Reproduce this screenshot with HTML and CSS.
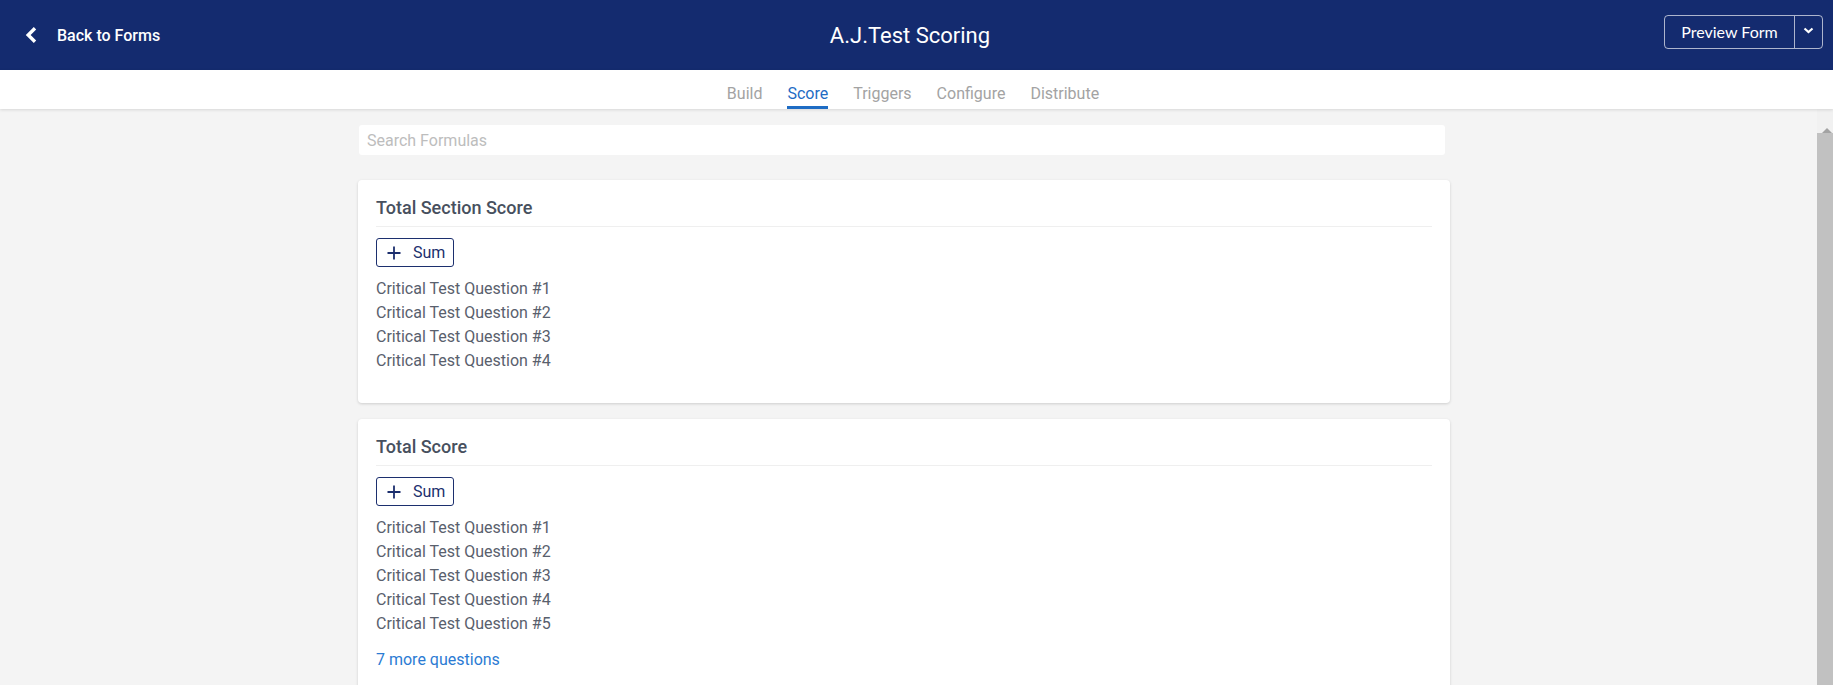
FILE: index.html
```html
<!DOCTYPE html>
<html lang="en">
<head>
    <meta charset="UTF-8">
    <meta name="viewport" content="width=device-width, initial-scale=1.0">
    <title>A.J.Test Scoring</title>
    <link rel="stylesheet" href="styles.css">
</head>
<body>

    <header class="topbar">
        <a class="back-link" href="#">
            <svg class="back-icon" width="12" height="16" viewBox="0 0 12 16">
                <path d="M10 1.3 L3.2 8 L10 14.7" fill="none" stroke="#fff" stroke-width="3.4" stroke-linejoin="miter"/>
            </svg>
            <span>Back to Forms</span>
        </a>
        <h1 class="form-title">A.J.Test Scoring</h1>
        <div class="preview-group">
            <button class="preview-btn">Preview Form</button>
            <button class="preview-caret">
                <svg width="11" height="7" viewBox="0 0 11 7">
                    <path d="M1.5 1.5 L5.5 5 L9.5 1.5" fill="none" stroke="#fff" stroke-width="2.2"/>
                </svg>
            </button>
        </div>
    </header>

    <nav class="tabs">
        <a class="tab" href="#">Build</a>
        <a class="tab active" href="#">Score</a>
        <a class="tab" href="#">Triggers</a>
        <a class="tab" href="#">Configure</a>
        <a class="tab" href="#">Distribute</a>
    </nav>

    <div class="main">
        <div class="content">
            <div class="container">
                <input class="search" type="text" placeholder="Search Formulas">

                <section class="card">
                    <h3 class="card-title">Total Section Score</h3>
                    <button class="sum-btn">
                        <svg width="14" height="14" viewBox="0 0 14 14">
                            <path d="M7 0.5 V13.5 M0.5 7 H13.5" stroke="#1c2f6e" stroke-width="1.8"/>
                        </svg>
                        <span>Sum</span>
                    </button>
                    <ul class="questions">
                        <li>Critical Test Question #1</li>
                        <li>Critical Test Question #2</li>
                        <li>Critical Test Question #3</li>
                        <li>Critical Test Question #4</li>
                    </ul>
                </section>

                <section class="card">
                    <h3 class="card-title">Total Score</h3>
                    <button class="sum-btn">
                        <svg width="14" height="14" viewBox="0 0 14 14">
                            <path d="M7 0.5 V13.5 M0.5 7 H13.5" stroke="#1c2f6e" stroke-width="1.8"/>
                        </svg>
                        <span>Sum</span>
                    </button>
                    <ul class="questions">
                        <li>Critical Test Question #1</li>
                        <li>Critical Test Question #2</li>
                        <li>Critical Test Question #3</li>
                        <li>Critical Test Question #4</li>
                        <li>Critical Test Question #5</li>
                    </ul>
                    <a class="more-link" href="#">7 more questions</a>
                </section>
            </div>
        </div>
        <div class="scrollbar">
            <div class="scroll-up"></div>
            <div class="scroll-thumb"></div>
        </div>
    </div>

</body>
</html>
```

FILE: styles.css
```css
body {
    font-family: Roboto, "Liberation Sans", sans-serif;
    margin: 0;
    height: 100vh;
    display: flex;
    flex-direction: column;
    overflow: hidden;
    background: #f4f4f4;
}
a {
    text-decoration: none;
}

/* top bar */
.topbar {
    height: 70px;
    flex-shrink: 0;
    background: #142b6f;
    display: grid;
    grid-template-columns: 1fr auto 1fr;
    align-items: center;
}
.back-link {
    display: flex;
    align-items: center;
    gap: 20px;
    padding-left: 25px;
    color: #fff;
    font-size: 16px;
    font-weight: 500;
}
.form-title {
    margin: 0 13px 0 0;
    color: #fff;
    font-size: 22px;
    font-weight: 400;
}
.preview-group {
    justify-self: end;
    align-self: start;
    margin: 15px 10px 0 0;
    display: flex;
    height: 34px;
    border: 1px solid rgba(255, 255, 255, 0.65);
    border-radius: 4px;
    box-sizing: border-box;
}
.preview-btn, .preview-caret {
    background: none;
    border: none;
    color: #fff;
    cursor: pointer;
    padding: 0;
}
.preview-btn {
    font-family: Lato, "Liberation Sans", sans-serif;
    font-size: 16px;
    width: 129px;
    padding-bottom: 2px;
}
.preview-caret {
    width: 28px;
    border-left: 1px solid rgba(255, 255, 255, 0.65);
    display: flex;
    align-items: center;
    justify-content: center;
    padding-bottom: 3px;
}

/* tabs */
.tabs {
    height: 39px;
    flex-shrink: 0;
    background: #fff;
    display: flex;
    justify-content: center;
    gap: 25px;
    padding-right: 7px;
    box-shadow: 0 1px 3px rgba(0, 0, 0, 0.12);
    position: relative;
    z-index: 1;
}
.tab {
    box-sizing: border-box;
    height: 39px;
    padding-top: 14px;
    line-height: 19px;
    font-size: 16px;
    color: #a3a3a3;
    border-bottom: 3px solid transparent;
}
.tab.active {
    color: #1e6cc4;
    border-bottom-color: #1e6cc4;
}

/* main area */
.main {
    flex: 1;
    min-height: 0;
    display: flex;
    overflow: hidden;
}
.content {
    flex: 1;
    padding: 0 9px 0 0;
}
.container {
    width: 1092px;
    margin: 0 auto;
    padding-top: 16px;
}
.search {
    display: block;
    box-sizing: border-box;
    width: 1086px;
    height: 30px;
    margin-left: 1px;
    padding: 1px 8px 0;
    border: none;
    border-radius: 3px;
    background: #fff;
    font-family: Roboto, sans-serif;
    font-size: 16px;
    outline: none;
}
.search::placeholder {
    color: #bdbdbd;
}
.card {
    background: #fff;
    border-radius: 4px;
    box-shadow: 0 1px 3px rgba(0, 0, 0, 0.16);
    padding: 16px 18px 18px;
    margin-top: 25px;
}
.card + .card {
    margin-top: 16px;
}
.card-title {
    margin: 0;
    font-size: 18px;
    font-weight: 500;
    line-height: 24px;
    color: #47505e;
    padding-bottom: 6px;
    border-bottom: 1px solid #efefef;
}
.sum-btn {
    margin-top: 11px;
    height: 29px;
    display: flex;
    align-items: center;
    gap: 12px;
    padding: 0 8px 0 10px;
    background: #fff;
    border: 1px solid #1c2f6e;
    border-radius: 3px;
    color: #1c2f6e;
    font-family: Roboto, sans-serif;
    font-size: 16px;
    cursor: pointer;
}
.questions {
    list-style: none;
    margin: 10px 0 12px;
    padding: 0;
}
.questions li {
    font-size: 16px;
    line-height: 24px;
    color: #59606d;
}
.more-link {
    display: block;
    font-size: 16px;
    line-height: 24px;
    color: #2b7bd3;
}

/* fake scrollbar */
.scrollbar {
    width: 16px;
    flex-shrink: 0;
    background: #f1f1f1;
    display: flex;
    flex-direction: column;
}
.scroll-up {
    height: 24px;
    display: flex;
    justify-content: center;
    padding-top: 10px;
    box-sizing: border-box;
}
.scroll-up::before {
    content: "";
    border-left: 5px solid transparent;
    border-right: 5px solid transparent;
    border-bottom: 5px solid #a3a3a3;
    margin-left: 4px;
}
.scroll-thumb {
    flex: 1;
    background: #c1c1c1;
}
```
